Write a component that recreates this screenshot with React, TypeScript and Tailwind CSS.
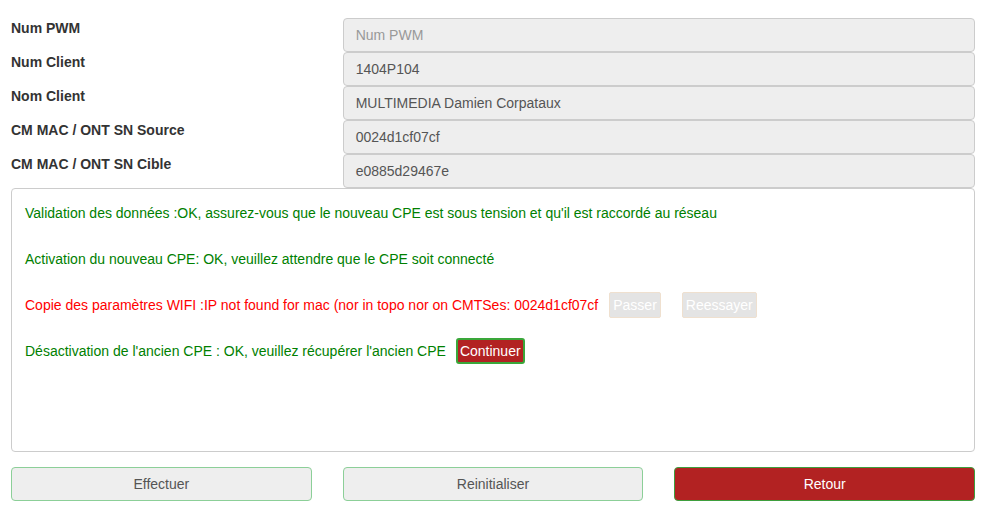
import { FC } from "react";

type FieldProps = {
    label: string
    value?: string
    placeholder?: string
}

const Field: FC<FieldProps> = (props: FieldProps) => {
    return (
        <div className="grid grid-cols-3 gap-x-[31px] h-[34px]">
            <label className="font-bold text-[14px] leading-[20px] text-[#333]">{props.label}</label>
            <div className="col-span-2 h-[34px] bg-[#eee] border border-[#ccc] rounded-[4px] px-[12px] flex items-center text-[14px] text-[#555]">
                {props.value ? props.value : <span className="text-[#999]">{props.placeholder}</span>}
            </div>
        </div>
    )
}

const fields: FieldProps[] = [
    { label: "Num PWM", placeholder: "Num PWM" },
    { label: "Num Client", value: "1404P104" },
    { label: "Nom Client", value: "MULTIMEDIA Damien Corpataux" },
    { label: "CM MAC / ONT SN Source", value: "0024d1cf07cf" },
    { label: "CM MAC / ONT SN Cible", value: "e0885d29467e" },
]

export default function App() {
    return (
        <div className="w-[988px] h-[529px] bg-white pl-[11px] pr-[13px] pt-[18px] font-['Liberation_Sans',Arial,sans-serif]">
            <div className="flex flex-col">
                {fields.map((f, index) => (
                    <Field key={index} {...f} />
                ))}
            </div>
            <div className="h-[264px] border border-[#ccc] rounded-[4px] px-[13px] pt-[1px] text-[14px]">
                <div className="h-[46px] flex items-center text-[#008000]">
                    Validation des données :OK, assurez-vous que le nouveau CPE est sous tension et qu'il est raccordé au réseau
                </div>
                <div className="h-[46px] flex items-center text-[#008000]">
                    Activation du nouveau CPE: OK, veuillez attendre que le CPE soit connecté
                </div>
                <div className="h-[46px] flex items-center text-[#ff0000]">
                    <span>Copie des paramètres WIFI :IP not found for mac (nor in topo nor on CMTSes: 0024d1cf07cf</span>
                    <button className="ml-[11px] h-[26px] px-[3px] bg-[#e4e4e4] border border-[#efe0cf] rounded-[2px] text-white text-[14px]">Passer</button>
                    <button className="ml-[21px] h-[26px] px-[3px] bg-[#e4e4e4] border border-[#efe0cf] rounded-[2px] text-white text-[14px]">Reessayer</button>
                </div>
                <div className="h-[46px] flex items-center text-[#008000]">
                    <span>Désactivation de l'ancien CPE : OK, veuillez récupérer l'ancien CPE</span>
                    <button className="ml-[10px] h-[26px] px-[2px] bg-[#b22222] border-2 border-[#3aa73a] rounded-[3px] text-white text-[14px]">Continuer</button>
                </div>
            </div>
            <div className="grid grid-cols-3 gap-x-[31px] mt-[15px]">
                <button className="h-[34px] bg-[#eee] border border-[#8ccf98] rounded-[4px] text-[14px] text-[#555]">Effectuer</button>
                <button className="h-[34px] bg-[#eee] border border-[#8ccf98] rounded-[4px] text-[14px] text-[#555]">Reinitialiser</button>
                <button className="h-[34px] bg-[#b22222] border border-[#3e9e3e] rounded-[4px] text-[14px] text-white">Retour</button>
            </div>
        </div>
    )
}
